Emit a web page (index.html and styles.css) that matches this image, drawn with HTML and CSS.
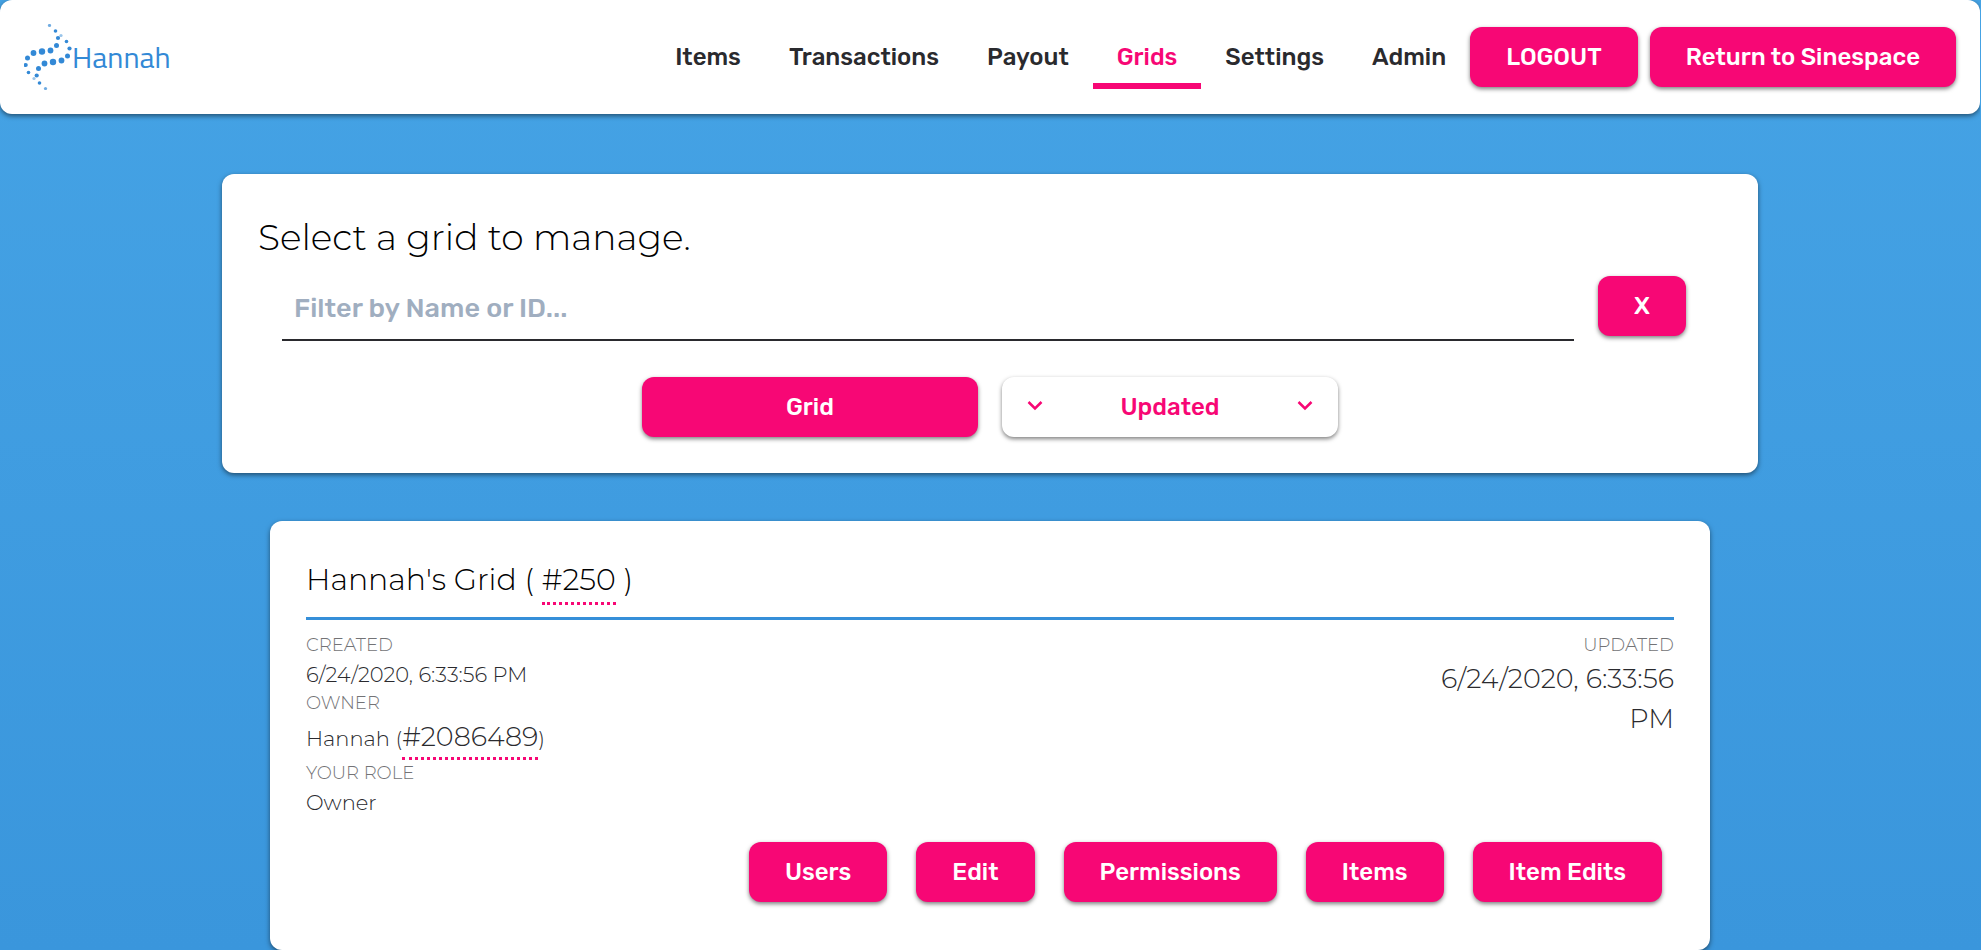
FILE: index.html
```html
<!DOCTYPE html>
<html lang="en">
<head>
  <meta charset="UTF-8" />
  <meta name="viewport" content="width=device-width, initial-scale=1.0"/>
  <title>Grids</title>
  <link rel="stylesheet" href="styles.css">
</head>
<body>
  <header class="navbar">
    <a class="brand" href="#">
      <svg class="brand-logo" viewBox="0 0 48 66" aria-hidden="true">
        <g fill="#3389d6">
          <circle cx="25.5" cy="1.5" r="1.6" opacity=".7"/>
          <circle cx="31.5" cy="7" r="1.8"/>
          <circle cx="37" cy="11.5" r="1.6" opacity=".5"/>
          <circle cx="34" cy="14" r="2.1"/>
          <circle cx="42.5" cy="17.5" r="1.8"/>
          <circle cx="32.5" cy="21.5" r="2.5"/>
          <circle cx="45.5" cy="24.5" r="2.1"/>
          <circle cx="26.5" cy="26.5" r="2.9"/>
          <circle cx="18" cy="27.5" r="3.2"/>
          <circle cx="9.5" cy="29" r="2.9"/>
          <circle cx="43.5" cy="32" r="2.5"/>
          <circle cx="3.5" cy="34" r="2.5"/>
          <circle cx="37.5" cy="36.5" r="2.9"/>
          <circle cx="29" cy="38" r="3.2"/>
          <circle cx="20.5" cy="39.5" r="2.9"/>
          <circle cx="1.7" cy="41" r="2.1"/>
          <circle cx="14.5" cy="44.5" r="2.5"/>
          <circle cx="4.5" cy="48.5" r="1.8"/>
          <circle cx="12.7" cy="51.5" r="2.1"/>
          <circle cx="10" cy="54.5" r="1.6" opacity=".5"/>
          <circle cx="15.5" cy="59" r="1.8"/>
          <circle cx="21.5" cy="64.5" r="1.6" opacity=".7"/>
        </g>
      </svg>
      <span class="brand-name">Hannah</span>
    </a>
    <nav class="nav">
      <a class="nav-link" href="#">Items</a>
      <a class="nav-link" href="#">Transactions</a>
      <a class="nav-link" href="#">Payout</a>
      <a class="nav-link active" href="#">Grids</a>
      <a class="nav-link" href="#">Settings</a>
      <a class="nav-link" href="#">Admin</a>
    </nav>
    <div class="nav-buttons">
      <button class="btn" type="button">LOGOUT</button>
      <button class="btn" type="button">Return to Sinespace</button>
    </div>
  </header>

  <main>
    <section class="card filter-card">
      <h1>Select a grid to manage.</h1>
      <form class="filter-row">
        <input class="filter-input" type="text" placeholder="Filter by Name or ID..." aria-label="Filter by Name or ID">
        <button class="btn" type="reset">X</button>
      </form>
      <div class="sort-row">
        <button class="btn sort-btn" type="button">Grid</button>
        <button class="btn btn-light sort-btn" type="button">
          <svg class="chevron" viewBox="0 0 16 16" aria-hidden="true"><path d="M1.5 3 L8 9.5 L14.5 3"/></svg>
          <span>Updated</span>
          <svg class="chevron" viewBox="0 0 16 16" aria-hidden="true"><path d="M1.5 3 L8 9.5 L14.5 3"/></svg>
        </button>
      </div>
    </section>

    <section class="card grid-card">
      <h2>Hannah's Grid ( <a class="id-link" href="#">#250</a> )</h2>
      <div class="details">
        <dl class="details-left">
          <dt>Created</dt>
          <dd>6/24/2020, 6:33:56 PM</dd>
          <dt>Owner</dt>
          <dd class="owner">Hannah (<a class="id-link owner-id" href="#">#2086489</a>)</dd>
          <dt>Your role</dt>
          <dd>Owner</dd>
        </dl>
        <dl class="details-right">
          <dt>Updated</dt>
          <dd>6/24/2020, 6:33:56 PM</dd>
        </dl>
      </div>
      <div class="actions">
        <button class="btn" type="button">Users</button>
        <button class="btn" type="button">Edit</button>
        <button class="btn" type="button">Permissions</button>
        <button class="btn" type="button">Items</button>
        <button class="btn" type="button">Item Edits</button>
      </div>
    </section>
  </main>
</body>
</html>
```

FILE: styles.css
```css
* {
  box-sizing: border-box;
}
body {
  margin: 0 1px 0 0;
  min-height: 100vh;
  font-family: Montserrat, Inter, sans-serif;
  font-weight: 300;
  color: #2a2a2e;
  background: linear-gradient(#45a3e5, #3a96dc);
}
h1, h2, dl, dd {
  margin: 0;
  font-weight: 300;
}
a {
  color: inherit;
  text-decoration: none;
}

.navbar {
  display: flex;
  align-items: center;
  padding: 24px;
  background: #fff;
  border-radius: 12px;
  box-shadow: 0 2px 5px rgba(0, 0, 0, 0.5);
}
.brand {
  display: flex;
  align-items: center;
  margin-right: auto;
  color: #3389d6;
}
.brand-logo {
  width: 48px;
  height: 66px;
}
.brand-name {
  font-family: "Titillium Web", "Noto Sans", sans-serif;
  font-size: 30px;
  font-weight: 400;
  line-height: 36px;
}
.nav {
  display: flex;
}
.nav-link {
  padding: 8px 24px;
  font-family: Rubik, Inter, sans-serif;
  font-size: 24px;
  font-weight: 500;
  line-height: 36px;
}
.nav-link.active {
  color: #f70775;
  box-shadow: 0 6px #f70775;
}
.nav-buttons {
  display: flex;
  gap: 12px;
}

.btn {
  padding: 12px 36px;
  border: 0;
  border-radius: 12px;
  background: #f70775;
  color: #fff;
  font-family: Rubik, Inter, sans-serif;
  font-size: 24px;
  font-weight: 500;
  line-height: 36px;
  box-shadow: 0 2px 4px rgba(0, 0, 0, 0.5);
  cursor: pointer;
}
.btn-light {
  background: #fff;
  color: #f70775;
}

main {
  display: flex;
  flex-direction: column;
  align-items: center;
  gap: 48px;
  padding: 60px 24px 0;
}
.card {
  width: 100%;
  padding: 36px;
  background: #fff;
  border-radius: 12px;
  box-shadow: 0 2px 5px rgba(0, 0, 0, 0.5);
}
.filter-card {
  max-width: 1536px;
}
.grid-card {
  max-width: 1440px;
}

h1 {
  font-size: 36px;
  line-height: 54px;
  color: #000;
}
.filter-row {
  display: flex;
  align-items: flex-start;
  gap: 24px;
  padding: 12px 36px 36px 24px;
}
.filter-input {
  flex: 1;
  padding: 14px 12px 12px;
  border: 0;
  border-bottom: 2px solid #2a2a2e;
  background: none;
  font-family: Rubik, Inter, sans-serif;
  font-size: 27px;
  font-weight: 500;
  line-height: 37px;
}
.filter-input::placeholder {
  color: #a0aec0;
}
.sort-row {
  display: flex;
  justify-content: center;
  gap: 24px;
}
.sort-btn {
  width: 336px;
}
.btn-light {
  display: flex;
  align-items: center;
  justify-content: space-between;
  padding: 12px 25px;
}
.chevron {
  width: 16px;
  height: 16px;
  fill: none;
  stroke: #f70775;
  stroke-width: 2.5;
}

h2 {
  padding-bottom: 15px;
  border-bottom: 3px solid #358fd9;
  font-size: 30px;
  line-height: 45px;
  color: #000;
}
.id-link {
  padding-bottom: 4px;
  border-bottom: 3px dotted #f70775;
}
.details {
  display: flex;
  justify-content: space-between;
  padding: 12px 0;
}
dt {
  font-size: 18px;
  line-height: 27px;
  text-transform: uppercase;
  color: #737376;
}
dd {
  font-size: 21px;
  line-height: 31px;
}
.owner {
  padding-bottom: 3px;
}
.owner-id {
  font-size: 27px;
  line-height: 40px;
}
.details-right {
  width: 264px;
  text-align: right;
}
.details-right dd {
  font-size: 27px;
  line-height: 40px;
}
.actions {
  display: flex;
  justify-content: flex-end;
  gap: 29px;
  padding: 12px;
}
```
